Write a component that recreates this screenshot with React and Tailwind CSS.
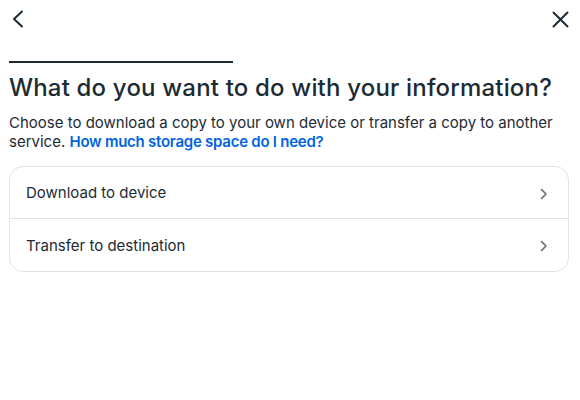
import React from "react";

function ChevronRight() {
  return (
    <svg width="10" height="12" viewBox="0 0 10 12" fill="none">
      <path d="M2.5 1.5 L7 6 L2.5 10.5" stroke="#65686c" strokeWidth="1.6" strokeLinecap="round" strokeLinejoin="round" />
    </svg>
  );
}

export default function App() {
  return (
    <div className="w-[580px] h-[400px] bg-white text-[#1c2b33]" style={{ fontFamily: "Inter, Roboto, sans-serif" }}>
      <div className="flex items-center justify-between h-[38px] pl-[12px] pr-[11px]">
        <button className="w-[12px] h-[18px] flex items-center">
          <svg width="12" height="18" viewBox="0 0 12 18" fill="none">
            <path d="M10 1.5 L2 9 L10 16.5" stroke="#1c2b33" strokeWidth="2" strokeLinecap="round" strokeLinejoin="round" />
          </svg>
        </button>
        <button className="w-[17px] h-[17px] flex items-center">
          <svg width="17" height="17" viewBox="0 0 17 17" fill="none">
            <path d="M1.5 1.5 L15.5 15.5 M15.5 1.5 L1.5 15.5" stroke="#1c2b33" strokeWidth="2" strokeLinecap="round" />
          </svg>
        </button>
      </div>
      <div className="px-[9px]">
        <div className="mt-[23px] w-[224px] h-[2px] bg-[#1c2b33]" />
        <h1 className="mt-[10px] text-[24px] leading-[30px] font-medium tracking-[0.18px]">What do you want to do with your information?</h1>
        <p className="mt-[10px] text-[15px] leading-[19px]">
          Choose to download a copy to your own device or transfer a copy to another service.{" "}
          <a className="text-[#0064e0] font-semibold tracking-[-0.25px]">How much storage space do I need?</a>
        </p>
        <div className="mt-[15px] border border-[#dee3e9] rounded-[14px] w-[560px]">
          <div className="flex items-center justify-between h-[52px] pt-[2px] pl-[16px] pr-[19px] border-b border-[#dee3e9]">
            <span className="text-[15px]">Download to device</span>
            <ChevronRight />
          </div>
          <div className="flex items-center justify-between h-[52px] pt-[2px] pl-[16px] pr-[19px]">
            <span className="text-[15px]">Transfer to destination</span>
            <ChevronRight />
          </div>
        </div>
      </div>
    </div>
  );
}
